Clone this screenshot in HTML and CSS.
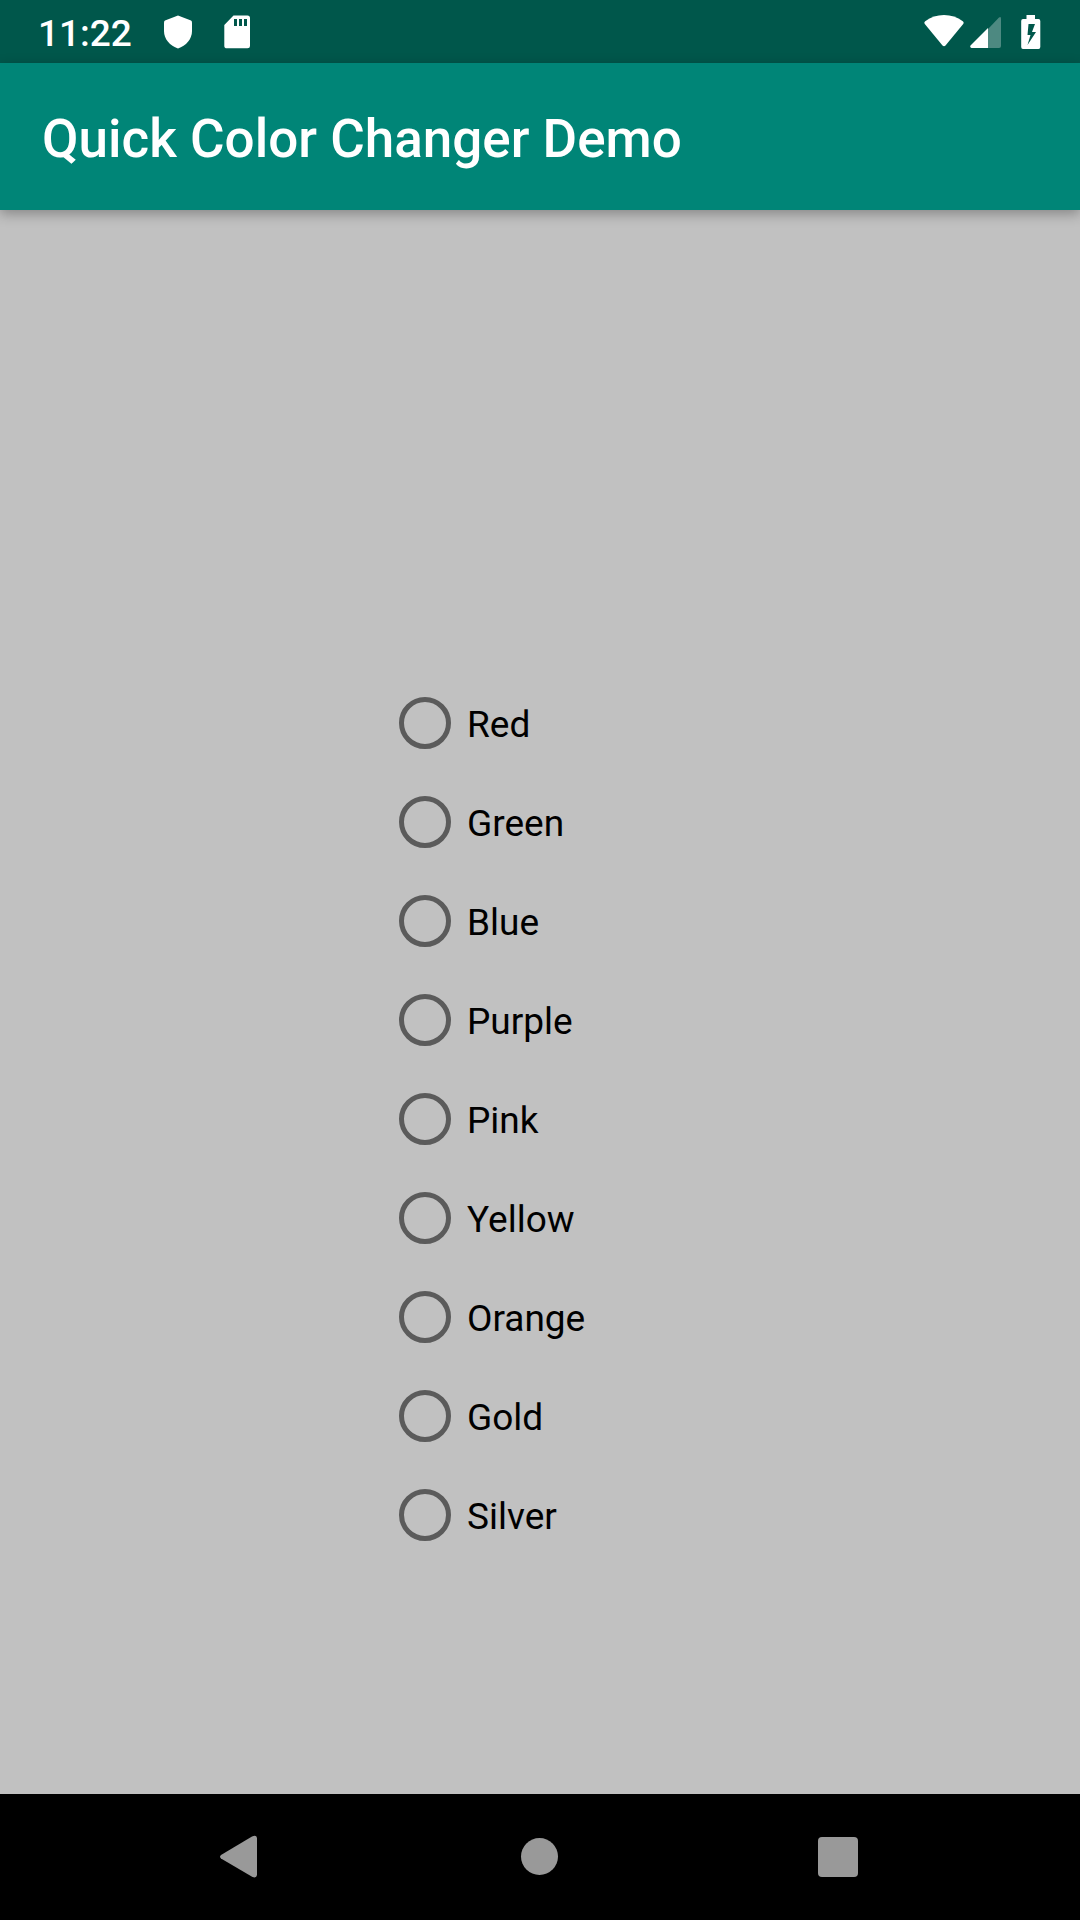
FILE: index.html
```html
<!DOCTYPE html>
<html lang="en">
<head>
<meta charset="utf-8">
<meta name="viewport" content="width=device-width, initial-scale=1">
<title>Quick Color Changer Demo</title>
<link rel="stylesheet" href="styles.css">
</head>
<body>
<div class="status-bar">
  <div class="status-group">
    <time class="clock">11:22</time>
    <svg class="icon" width="28" height="34" viewBox="0 0 28 34" aria-hidden="true"><path d="M14 0.500L27 5.500Q28 6 28 7.500V16C28 24 22 31 14 33.500C6 31 0 24 0 16V7.500Q0 6 1 5.500Z"/></svg>
    <svg class="icon" width="26" height="34" viewBox="0 0 26 34" aria-hidden="true"><path fill-rule="evenodd" d="M9.500 0.500H23.500Q26 0.500 26 3V31Q26 33.300 23.500 33.300H3Q0.300 33.300 0.300 31V10ZM10 4V11H13V4ZM15 4V11H18V4ZM20 4V11H23V4Z"/></svg>
  </div>
  <div class="status-group status-system">
    <svg class="icon" width="40" height="34" viewBox="0 0 40 34" aria-hidden="true"><path d="M0.800 9Q-0.300 7.500 1.200 6.300Q9.500 0 20 0T38.800 6.300Q40.300 7.500 39.200 9L21.500 30.500Q20 32 18.500 30.500Z"/></svg>
    <svg class="icon signal" width="32" height="34" viewBox="0 0 32 34" aria-hidden="true"><path class="faint" d="M18 14L29 2.500Q31 1 31 3.500V31Q31 33 29 33H18Z"/><path d="M18 13V33H1.500Q-0.300 32.500 0.500 30.500Z"/></svg>
    <svg class="icon battery" width="20" height="34" viewBox="0 0 20 34" aria-hidden="true"><path fill-rule="evenodd" d="M5.500 0H14V4H17.500Q19.300 4 19.300 6V32Q19.300 34 17.500 34H2Q0.200 34 0.200 32V6Q0.200 4 2 4H5.500ZM7.500 9L6.500 20H9.500L6.500 30L15 17H11L14 9Z"/></svg>
  </div>
</div>
<header class="app-bar"><h1 class="title">Quick Color Changer Demo</h1></header>
<main class="content">
  <div class="color-list" role="radiogroup" aria-label="Color">
    <label class="option"><input class="radio" type="radio" name="color" value="red"><span class="name">Red</span></label>
    <label class="option"><input class="radio" type="radio" name="color" value="green"><span class="name">Green</span></label>
    <label class="option"><input class="radio" type="radio" name="color" value="blue"><span class="name">Blue</span></label>
    <label class="option"><input class="radio" type="radio" name="color" value="purple"><span class="name">Purple</span></label>
    <label class="option"><input class="radio" type="radio" name="color" value="pink"><span class="name">Pink</span></label>
    <label class="option"><input class="radio" type="radio" name="color" value="yellow"><span class="name">Yellow</span></label>
    <label class="option"><input class="radio" type="radio" name="color" value="orange"><span class="name">Orange</span></label>
    <label class="option"><input class="radio" type="radio" name="color" value="gold"><span class="name">Gold</span></label>
    <label class="option"><input class="radio" type="radio" name="color" value="silver"><span class="name">Silver</span></label>
  </div>
</main>
<nav class="nav-bar" aria-label="System">
  <button class="nav-button" type="button" aria-label="Back"><svg width="60" height="60" viewBox="0 0 60 60"><path d="M11 28L42 9.500Q46.500 7.500 47 11V48Q46.500 51.500 42.500 50L11 31.500Q9 29.800 11 28Z"/></svg></button>
  <button class="nav-button" type="button" aria-label="Home"><svg width="60" height="60" viewBox="0 0 60 60"><circle cx="29.500" cy="29.500" r="18.500"/></svg></button>
  <button class="nav-button" type="button" aria-label="Recent apps"><svg width="60" height="60" viewBox="0 0 60 60"><rect x="8" y="10" width="40" height="40" rx="4"/></svg></button>
</nav>
</body>
</html>
```
FILE: styles.css
```css
* {
  box-sizing: border-box;
}

body {
  display: flex;
  flex-direction: column;
  min-height: 100vh;
  margin: 0;
  background: #c1c1c1;
  color: #000;
  font-family: Roboto, sans-serif;
}

.status-bar {
  display: flex;
  align-items: center;
  justify-content: space-between;
  height: 63px;
  padding: 0 39px 0 38px;
  background: #00574b;
  color: #fff;
}

.status-group {
  display: flex;
  align-items: center;
  gap: 32px;
}

.status-system {
  gap: 6px;
}

.clock {
  padding-top: 4px;
  font-size: 37px;
  font-weight: 500;
  line-height: 44px;
}

.icon {
  display: block;
  fill: #fff;
}

.faint {
  opacity: 0.3;
}

.battery {
  margin-left: 13px;
}

.app-bar {
  display: flex;
  align-items: center;
  min-height: 147px;
  padding: 4px 42px 0;
  background: #008577;
  color: #fff;
  box-shadow: 0 4px 12px rgba(0, 0, 0, 0.3);
}

.title {
  margin: 0;
  font-size: 53px;
  font-weight: 500;
  line-height: 62px;
}

.content {
  display: flex;
  flex: 1;
  align-items: center;
  justify-content: center;
  padding-top: 233px;
}

.color-list {
  width: 282px;
}

.option {
  display: flex;
  align-items: center;
  gap: 16px;
  height: 99px;
}

.radio {
  appearance: none;
  flex: none;
  width: 52px;
  height: 52px;
  margin: 0;
  border: 5px solid #5b5b5b;
  border-radius: 50%;
}

.radio:checked {
  background: radial-gradient(#008577 50%, transparent 54%);
  border-color: #008577;
}

.name {
  padding-top: 4px;
  font-size: 37px;
  line-height: 44px;
}

.nav-bar {
  display: flex;
  justify-content: center;
  height: 126px;
  background: #000;
}

.nav-button {
  display: flex;
  flex: 0 1 300px;
  align-items: center;
  justify-content: center;
  padding: 0;
  border: 0;
  background: none;
  fill: #999;
}
```
